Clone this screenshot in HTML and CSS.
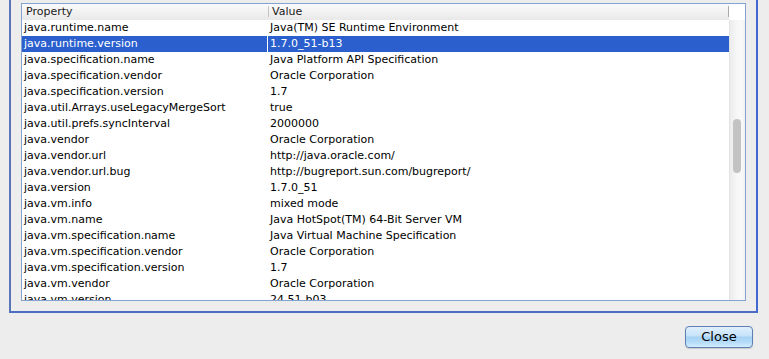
FILE: index.html
```html
<!DOCTYPE html>
<html>
<head>
<meta charset="utf-8">
<link rel="stylesheet" href="styles.css">
</head>
<body>
<div class="dialog">
  <div class="panel">
    <div class="table">
      <div class="content">
        <div class="header">
          <div class="hcell">Property</div>
          <div class="hcell sep">Value</div>
          <div class="hend"></div>
        </div>
        <div class="rows">
          <div class="row"><div class="cell">java.runtime.name</div><div class="cell">Java(TM) SE Runtime Environment</div></div>
          <div class="row selected"><div class="cell">java.runtime.version</div><div class="cell">1.7.0_51-b13</div></div>
          <div class="row"><div class="cell">java.specification.name</div><div class="cell">Java Platform API Specification</div></div>
          <div class="row"><div class="cell">java.specification.vendor</div><div class="cell">Oracle Corporation</div></div>
          <div class="row"><div class="cell">java.specification.version</div><div class="cell">1.7</div></div>
          <div class="row"><div class="cell">java.util.Arrays.useLegacyMergeSort</div><div class="cell">true</div></div>
          <div class="row"><div class="cell">java.util.prefs.syncInterval</div><div class="cell">2000000</div></div>
          <div class="row"><div class="cell">java.vendor</div><div class="cell">Oracle Corporation</div></div>
          <div class="row"><div class="cell">java.vendor.url</div><div class="cell">http://java.oracle.com/</div></div>
          <div class="row"><div class="cell">java.vendor.url.bug</div><div class="cell">http://bugreport.sun.com/bugreport/</div></div>
          <div class="row"><div class="cell">java.version</div><div class="cell">1.7.0_51</div></div>
          <div class="row"><div class="cell">java.vm.info</div><div class="cell">mixed mode</div></div>
          <div class="row"><div class="cell">java.vm.name</div><div class="cell">Java HotSpot(TM) 64-Bit Server VM</div></div>
          <div class="row"><div class="cell">java.vm.specification.name</div><div class="cell">Java Virtual Machine Specification</div></div>
          <div class="row"><div class="cell">java.vm.specification.vendor</div><div class="cell">Oracle Corporation</div></div>
          <div class="row"><div class="cell">java.vm.specification.version</div><div class="cell">1.7</div></div>
          <div class="row"><div class="cell">java.vm.vendor</div><div class="cell">Oracle Corporation</div></div>
          <div class="row"><div class="cell">java.vm.version</div><div class="cell">24.51-b03</div></div>
        </div>
      </div>
      <div class="vscroll">
        <div class="corner"></div>
        <div class="track"><div class="thumb"></div></div>
      </div>
    </div>
  </div>
  <div class="footer">
    <button class="btn">Close</button>
  </div>
</div>
</body>
</html>
```

FILE: styles.css
```css
html, body {
  margin: 0;
  padding: 0;
  background: #ededed;
  overflow: hidden;
}
body {
  font-family: "DejaVu Sans", "Liberation Sans", sans-serif;
  font-size: 11px;
  color: #000;
  width: 769px;
  height: 359px;
}
.dialog {
  display: flex;
  flex-direction: column;
}
.panel {
  margin: -9px 11px 0 9px;
  border: 2px solid #4169d3;
  border-left-color: #5a74b8;
  border-bottom-color: #4d6cc4;
  padding: 10px;
  background: #ededed;
}
.table {
  height: 296px;
  border: 1px solid #86a2cf;
  background: #fff;
  display: flex;
  overflow: hidden;
}
.content {
  flex: 1;
  display: flex;
  flex-direction: column;
  min-width: 0;
}
.header {
  height: 16px;
  display: grid;
  grid-template-columns: 245px 1fr 1px;
  column-gap: 1px;
  background: linear-gradient(#fbfbfb, #f3f3f3 45%, #e8e8e8 100%);
  color: #1a1a1a;
  line-height: 16px;
}
.hcell {
  padding-left: 4px;
  white-space: nowrap;
  position: relative;
}
.hcell.sep::before {
  content: "";
  position: absolute;
  left: 0;
  top: 2px;
  height: 11px;
  border-left: 1px solid #c4c4c4;
}
.hend {
  margin: 2px 0 3px;
  background: #a9a9a9;
}
.rows {
  display: flex;
  flex-direction: column;
}
.row {
  height: 16px;
  display: grid;
  grid-template-columns: 245px 1fr;
  column-gap: 1px;
  line-height: 16px;
  flex: none;
}
.cell {
  padding-left: 2px;
  white-space: nowrap;
  overflow: hidden;
}
.row.selected .cell {
  background: #2b5fce;
  color: #fff;
}
.vscroll {
  width: 16px;
  display: flex;
  flex-direction: column;
}
.corner {
  height: 16px;
  background: #fff;
}
.track {
  flex: 1;
  background: linear-gradient(to right, #dadada 0, #ececec 1px, #f7f7f7 50%, #f9f9f9 80%, #f1f1f1 100%);
  padding-top: 99px;
}
.thumb {
  width: 8px;
  height: 54px;
  margin-left: 4px;
  border-radius: 4px;
  background: #c3c3c3;
}
.footer {
  display: flex;
  justify-content: flex-end;
  padding: 13px 16px 0 0;
}
.btn {
  width: 68px;
  height: 22px;
  padding: 0;
  margin: 0;
  border: 1px solid #5d7fb2;
  border-radius: 4px;
  font-family: "DejaVu Sans", "Liberation Sans", sans-serif;
  font-size: 13px;
  color: #000;
  line-height: 20px;
  background: linear-gradient(#e0f0fd 0, #c6e2f9 45%, #a6d2f4 50%, #b3dbf8 75%, #d3edfe 100%);
  box-shadow: 0 1px 1px rgba(0,0,0,0.15);
}
```
